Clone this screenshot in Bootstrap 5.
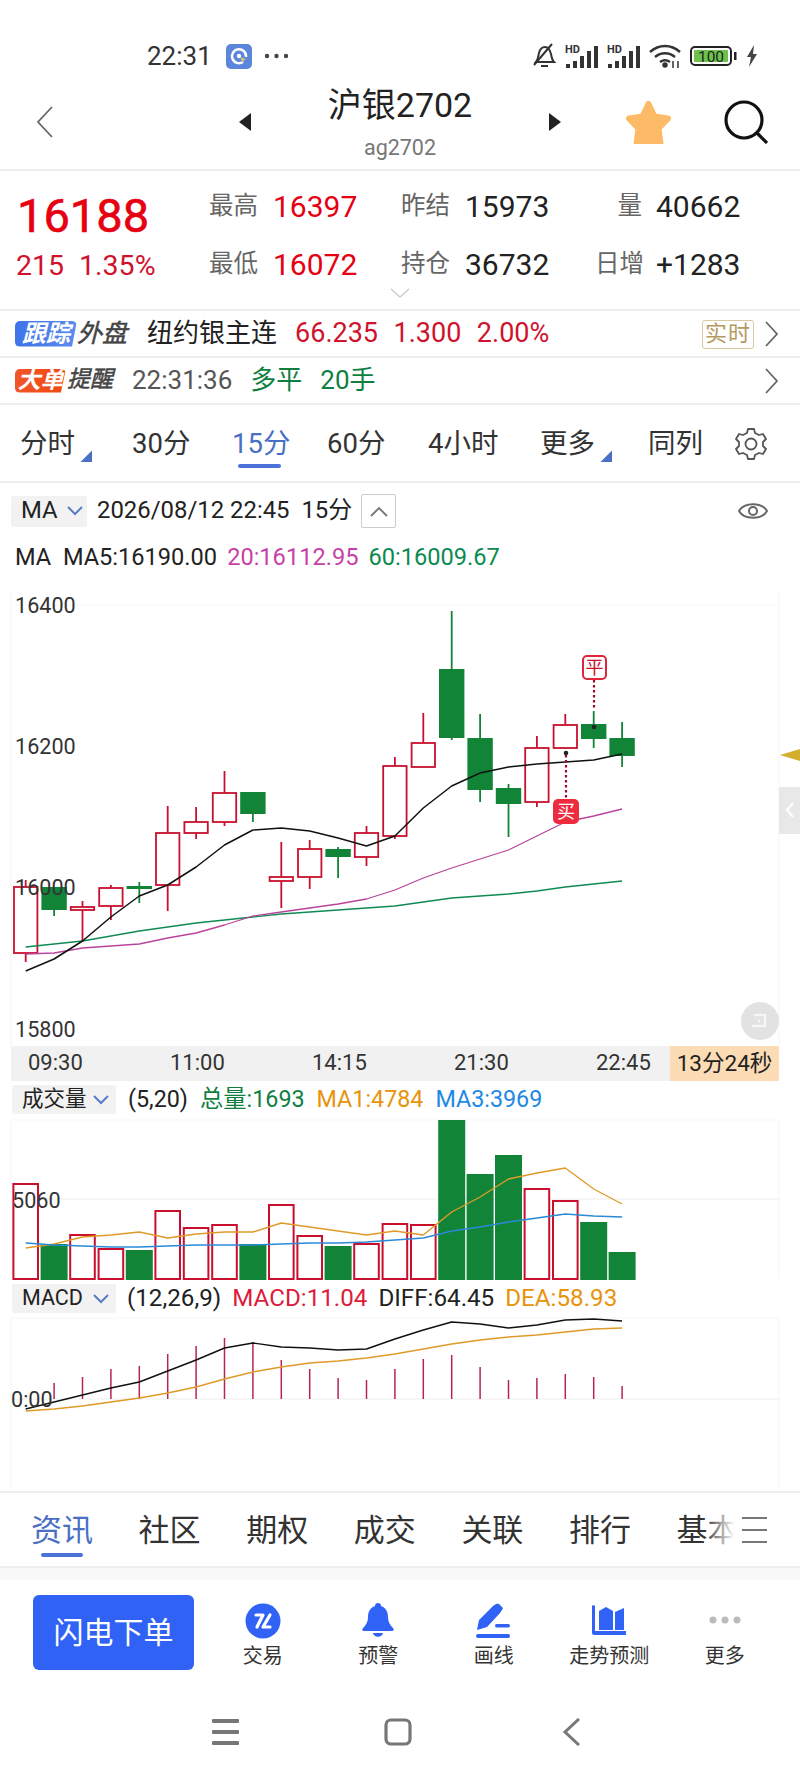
<!DOCTYPE html>
<html lang="zh-CN">
<head>
    <meta charset="UTF-8">
    <meta name="viewport" content="width=device-width, initial-scale=1.0">
    <title>沪银2702</title>
    <link href="https://cdn.jsdelivr.net/npm/bootstrap@5.3.0/dist/css/bootstrap.min.css" rel="stylesheet">
    <style>
        body { width: 800px; height: 1778px; overflow: hidden; background: #fff; color: #222;
               font-family: Roboto, "Noto Sans CJK SC", sans-serif; }
        svg { display: block; flex: none; }
        svg text { font-family: Roboto, "Noto Sans CJK SC", sans-serif; }
        .up-red { color: #e60012; }
        .dn-red { color: #d0122d; }
        .st-green { color: #0f7f3f; }
        .sep { border-bottom: 2px solid #eee; }

        .status-bar { height: 78px; padding: 34px 42px 0 147px; }
        .status-time { font-size: 26px; color: #333; width: 79px; }
        .status-dots { margin-left: 12px; }
        .status-right { margin-left: auto; gap: 9px; }

        .top-head { height: 93px; padding: 0 0 4px 36px; }
        .head-prev { margin-left: 186px; }
        .head-star { margin-left: 65px; }
        .head-search { margin-left: 53px; }
        .top-title { width: 298px; text-align: center; margin-top: 4px; }
        .top-title-main { font-size: 34px; line-height: 42px; color: #222; }
        .top-title-sub { font-size: 21.5px; line-height: 30px; margin-top: 7px; color: #777; }

        .quote-box { height: 140px; position: relative; padding-top: 6px; }
        .quote-left { width: 209px; padding: 9px 0 0 17px; }
        .quote-last { font-size: 47px; line-height: 60px; -webkit-text-stroke: .6px #e60012; margin-bottom: 2px; }
        .quote-chg { font-size: 28.500px; line-height: 36px; margin-left: -1px; color: #d0122d; }
        .quote-chg span + span { margin-left: 15px; }
        .quote-stat { height: 58px; align-items: center; font-size: 30px; }
        .stat-a { width: 192px; }
        .stat-b { width: 194px; }
        .stat-c { width: 146px; }
        .stat-name { font-size: 24.5px; color: #666; width: 64px; }
        .stat-c .stat-name { width: 47px; margin-right: 14px; text-align: right; white-space: nowrap; }
        .quote-more { position: absolute; left: 390px; top: 117px; }

        .info-row { font-size: 26px; padding-left: 15px; position: relative; white-space: nowrap; height: 47px; }
        .tag-blue { background: linear-gradient(90deg, #3f73e8, #5b8cf0); color: #fff; font-size: 24px; line-height: 26px;
                    width: 62px; height: 26px; font-style: italic; font-weight: 700; text-align: center; border-radius: 5px 5px 0 5px;
                    clip-path: polygon(0 0, 100% 0, 92% 100%, 0 100%); }
        .tag-dark { color: #444; font-style: italic; font-size: 25px; -webkit-text-stroke: .5px #444; }
        .tag-dark-sm { font-size: 23px; margin-left: 1px; }
        .tag-orange { background: linear-gradient(90deg, #f0562a, #f2480f); color: #fff; font-size: 23px; line-height: 24px;
                      width: 51px; height: 24px; font-style: italic; font-weight: 700; text-align: center; border-radius: 5px 5px 0 5px;
                      clip-path: polygon(0 0, 100% 0, 90% 100%, 0 100%); }
        .fut-name { margin: 0 18px 0 20px; }
        .fut-num { font-size: 27px; }
        .fut-num + .fut-num { margin-left: 15.5px; }
        .alert-time { margin-left: 19px; color: #555; }
        .alert-item { margin-left: 18px; }
        .rt-box { position: absolute; left: 702px; top: 9px; width: 52px; height: 29px; border: 1px solid #d8c9a2; border-radius: 3px;
                  color: #b59a5f; font-size: 22px; line-height: 26px; text-align: center; letter-spacing: 1px; }
        .row-arrow { position: absolute; left: 765px; }

        .period-row { height: 78px; display: grid; padding: 2px 0 0 20px;
                      grid-template-columns: 112px 100px 95px 101px 112px 108px 87px 1fr; align-items: center; font-size: 27.5px; color: #333; }
        .period-on { color: #4a6fc4; position: relative; }
        .period-on::after { content: ""; position: absolute; left: 6px; width: 43px; height: 4px; top: 41px; border-radius: 2px; background: #4a72d8; }
        .period-item { position: relative; white-space: nowrap; }
        .period-corner { position: absolute; left: 60px; width: 12px; height: 12px; top: 27px; background: #4a6fc4; clip-path: polygon(100% 0, 100% 100%, 0 100%); }

        .drop-box { background: #f2f2f2; border-radius: 3px; align-items: center; }
        .ma-head { height: 56px; padding-left: 11px; font-size: 23.9px; position: relative; }
        .ma-drop { width: 76px; height: 31px; padding-left: 10px; gap: 9px; }
        .ma-stamp { margin-left: 10px; width: 264px; white-space: nowrap; }
        .fold-btn { width: 35px; height: 34px; border: 1px solid #ccc; border-radius: 2px; }
        .ma-eye { margin-left: auto; margin-right: 32px; }
        .legend-row { font-size: 23.3px; white-space: nowrap; }
        .ma-line { height: 36px; padding: 2px 0 0 15px; gap: 10px; font-size: 23.6px; }
        .c-ma20 { color: #c73fa8; }
        .c-ma60 { color: #0a8a50; }
        .c-ma1 { color: #e8930c; }
        .c-ma3 { color: #1e88e5; }
        .c-red { color: #dc1c3c; }

        .time-axis { height: 35px; margin-left: 11px; width: 768px; background: #f1f1f1; font-size: 22px; }
        .time-list { display: grid; grid-template-columns: repeat(5, 142px); padding: 0 0 6px 17px; width: 659px; color: #333; white-space: nowrap; }
        .time-left { width: 109px; background: #fcdcb4; text-align: center; font-size: 22.5px; white-space: nowrap; }

        .sub-head { padding-left: 12px; gap: 12px; }
        .sub-head-a { height: 37px; }
        .sub-head-b { height: 35px; font-size: 24.2px; gap: 11px; }
        .sub-drop { width: 104px; height: 29px; padding-left: 10px; justify-content: space-between; padding-right: 7px; font-size: 21.5px; }

        .news-tabs { height: 77px; border-top: 2px solid #eee; padding: 3px 0 0 31px; gap: 45.6px; font-size: 31px; color: #333; position: relative; white-space: nowrap; overflow: hidden; }
        .news-on { color: #4a6fc4; position: relative; }
        .news-on::after { content: ""; position: absolute; left: 10px; width: 42px; height: 4px; top: 45px; border-radius: 2px; background: #4a72d8; }
        .news-fade { position: absolute; right: 0; top: 0; bottom: 0; width: 96px; display: flex; align-items: center;
                     background: linear-gradient(90deg, rgba(255,255,255,0), #fff 32%); padding-left: 38px; }
        .band { height: 12px; background: #f8f8f8; }

        .action-bar { height: 105px; padding-left: 33px; }
        .fast-btn { width: 161px; height: 75px; background: #2f62f5; color: #fff; border: 0; border-radius: 6px; font-size: 30px; margin-right: 11px; padding: 0; }
        .action-item { flex: 0 0 115.5px; font-size: 20px; color: #333; white-space: nowrap; align-self: flex-start; padding-top: 23px; }
        .action-icon { height: 36px; margin-bottom: 2px; }
        .sys-nav { height: 93px; padding-right: 4px; }
        .sys-nav > div { width: 173px; }
    </style>
</head>
<body>

<div class="status-bar d-flex align-items-center">
    <span class="status-time">22:31</span>
    <svg width="26" height="25" viewBox="0 0 26 25"><rect width="26" height="25" rx="5" fill="#5b86dc"/><path d="M17 18a7 7 0 1 1 3-5" fill="none" stroke="#fff" stroke-width="2.500"/><circle cx="13" cy="12" r="2.200" fill="#fff"/><path d="M14 13l6 2-2 1-1 3z" fill="#d8c27a"/></svg>
    <svg class="status-dots" width="25" height="6" viewBox="0 0 25 6" fill="#444"><circle cx="3" cy="3" r="2.200"/><circle cx="12.500" cy="3" r="2.200"/><circle cx="22" cy="3" r="2.200"/></svg>
    <div class="status-right d-flex align-items-center">
        <svg width="24" height="26" viewBox="0 0 24 26" fill="none" stroke="#333" stroke-width="2"><path d="M4 19c2-2 2-5 3-9 1-4 3-6 6-6s5 3 6 7c.5 3 1 6 3 8z"/><path d="M9 23h7M20 1L2 22"/></svg>
        <svg width="33" height="24" viewBox="0 0 33 24"><text x="0" y="9" font-size="11" font-weight="700" fill="#333">HD</text><g fill="#333"><rect x="1" y="20" width="4" height="4"/><rect x="8" y="17" width="4" height="7"/><rect x="15" y="12" width="4" height="12"/><rect x="22" y="7" width="4" height="17"/><rect x="29" y="2" width="4" height="22"/></g></svg>
        <svg width="33" height="24" viewBox="0 0 33 24"><text x="0" y="9" font-size="11" font-weight="700" fill="#333">HD</text><g fill="#333"><rect x="1" y="20" width="4" height="4"/><rect x="8" y="17" width="4" height="7"/><rect x="15" y="12" width="4" height="12"/><rect x="22" y="7" width="4" height="17"/><rect x="29" y="2" width="4" height="22"/></g></svg>
        <svg width="32" height="24" viewBox="0 0 32 24" fill="none" stroke="#333" stroke-width="2.500"><path d="M1 8c9-8 21-8 30 0M6 13c6-5 14-5 20 0M11 18c3-2 7-2 10 0"/><circle cx="16" cy="21" r="1.500" fill="#333"/><path d="M24 17v7M29 17v7" stroke-width="1.500"/></svg>
        <svg width="47" height="20" viewBox="0 0 47 20"><rect x="1" y="1" width="40" height="18" rx="4" fill="#fff" stroke="#222" stroke-width="2"/><rect x="4" y="4" width="34" height="12" rx="1" fill="#6cc24a"/><text x="21" y="16" font-size="15.500" text-anchor="middle" fill="#222">100</text><rect x="44" y="6" width="2.500" height="8" fill="#222"/></svg>
        <svg width="12" height="22" viewBox="0 0 12 22"><path d="M8 0L1 12h4l-2 10 8-13H7z" fill="#444"/></svg>
    </div>
</div>

<div class="top-head sep d-flex align-items-center">
    <svg width="17" height="32" viewBox="0 0 17 32"><path d="M16 1L2 16l14 15" fill="none" stroke="#666" stroke-width="1.800"/></svg>
    <svg class="head-prev" width="12" height="18" viewBox="0 0 12 18"><path d="M12 0v18L0 9z" fill="#222"/></svg>
    <div class="top-title">
        <div class="top-title-main">沪银2702</div>
        <div class="top-title-sub">ag2702</div>
    </div>
    <svg width="12" height="18" viewBox="0 0 12 18"><path d="M0 0v18l12-9z" fill="#222"/></svg>
    <svg class="head-star" width="45" height="44" viewBox="0 0 45 44"><path d="M22.500 4l6 12.500 13.500 2-9.500 10 2 15.500h-24l2-15.500-9.500-10 13.500-2z" fill="#fdbb68" stroke="#fdbb68" stroke-width="6" stroke-linejoin="round"/></svg>
    <svg class="head-search" width="44" height="44" viewBox="0 0 44 44" fill="none" stroke="#111" stroke-width="3.200"><circle cx="20" cy="20" r="18"/><path d="M33 33l10 10"/></svg>
</div>

<div class="quote-box sep d-flex">
    <div class="quote-left">
        <div class="quote-last up-red">16188</div>
        <div class="quote-chg"><span>215</span><span>1.35%</span></div>
    </div>
    <div class="stat-a">
        <div class="quote-stat d-flex"><span class="stat-name">最高</span><span class="up-red">16397</span></div>
        <div class="quote-stat d-flex"><span class="stat-name">最低</span><span class="up-red">16072</span></div>
    </div>
    <div class="stat-b">
        <div class="quote-stat d-flex"><span class="stat-name">昨结</span><span>15973</span></div>
        <div class="quote-stat d-flex"><span class="stat-name">持仓</span><span>36732</span></div>
    </div>
    <div class="stat-c">
        <div class="quote-stat d-flex"><span class="stat-name">量</span><span>40662</span></div>
        <div class="quote-stat d-flex"><span class="stat-name">日增</span><span>+1283</span></div>
    </div>
    <svg class="quote-more" width="20" height="10" viewBox="0 0 20 10"><path d="M1 1l9 8 9-8" fill="none" stroke="#ccc" stroke-width="1.500"/></svg>
</div>

<div class="info-row sep d-flex align-items-center">
    <span class="tag-blue">跟踪</span><span class="tag-dark">外盘</span>
    <span class="fut-name">纽约银主连</span>
    <span class="dn-red fut-num">66.235</span>
    <span class="dn-red fut-num">1.300</span>
    <span class="dn-red fut-num">2.00%</span>
    <span class="rt-box">实时</span>
    <svg class="row-arrow" width="13" height="26" viewBox="0 0 13 26"><path d="M1 1l11 12L1 25" fill="none" stroke="#666" stroke-width="1.800"/></svg>
</div>

<div class="info-row sep d-flex align-items-center">
    <span class="tag-orange">大单</span><span class="tag-dark tag-dark-sm">提醒</span>
    <span class="alert-time">22:31:36</span>
    <span class="st-green alert-item">多平</span>
    <span class="st-green alert-item">20手</span>
    <svg class="row-arrow" width="13" height="26" viewBox="0 0 13 26"><path d="M1 1l11 12L1 25" fill="none" stroke="#666" stroke-width="1.800"/></svg>
</div>

<div class="period-row sep">
    <div class="period-item">分时<span class="period-corner"></span></div>
    <div class="period-item">30分</div>
    <div class="period-item period-on">15分</div>
    <div class="period-item">60分</div>
    <div class="period-item">4小时</div>
    <div class="period-item">更多<span class="period-corner"></span></div>
    <div class="period-item">同列</div>
    <svg width="32" height="34" viewBox="0 0 32 34" fill="none" stroke="#555" stroke-width="1.800" stroke-linejoin="round"><path d="M13 2h6l1 4 4 2 4-1 3 5-3 3v4l3 3-3 5-4-1-4 2-1 4h-6l-1-4-4-2-4 1-3-5 3-3v-4l-3-3 3-5 4 1 4-2z"/><circle cx="16" cy="17" r="5.500"/></svg>
</div>

<div class="ma-head d-flex align-items-center">
    <div class="drop-box ma-drop d-flex"><span>MA</span><svg width="16" height="10" viewBox="0 0 16 10"><path d="M1 1l7 7 7-7" fill="none" stroke="#5a7bc8" stroke-width="2"/></svg></div>
    <span class="ma-stamp">2026/08/12 22:45&nbsp;&nbsp;15分</span>
    <div class="fold-btn d-flex align-items-center justify-content-center"><svg width="18" height="11" viewBox="0 0 18 11"><path d="M1 10l8-8 8 8" fill="none" stroke="#777" stroke-width="1.800"/></svg></div>
    <svg class="ma-eye" width="30" height="22" viewBox="0 0 30 22" fill="none" stroke="#666" stroke-width="2"><path d="M1 11C6 2 24 2 29 11 24 20 6 20 1 11z"/><circle cx="15" cy="11" r="4"/></svg>
</div>

<div class="legend-row ma-line d-flex align-items-center">
    <span>MA&nbsp;&nbsp;MA5:16190.00</span>
    <span class="c-ma20">20:16112.95</span>
    <span class="c-ma60">60:16009.67</span>
</div>

<svg id="chartMain" width="800" height="471" viewBox="0 575 800 471"></svg>

<div class="time-axis d-flex">
    <div class="time-list align-items-center">
        <span>09:30</span><span>11:00</span><span>14:15</span><span>21:30</span><span>22:45</span>
    </div>
    <div class="time-left d-flex align-items-center justify-content-center">13分24秒</div>
</div>

<div class="legend-row sub-head sub-head-a d-flex align-items-center">
    <div class="drop-box sub-drop d-flex"><span>成交量</span><svg width="16" height="10" viewBox="0 0 16 10"><path d="M1 1l7 7 7-7" fill="none" stroke="#5a7bc8" stroke-width="2"/></svg></div>
    <span>(5,20)</span>
    <span class="st-green">总量:1693</span>
    <span class="c-ma1">MA1:4784</span>
    <span class="c-ma3">MA3:3969</span>
</div>

<svg id="chartVol" width="800" height="163" viewBox="0 1118 800 163"></svg>

<div class="legend-row sub-head sub-head-b d-flex align-items-center">
    <div class="drop-box sub-drop d-flex"><span>MACD</span><svg width="16" height="10" viewBox="0 0 16 10"><path d="M1 1l7 7 7-7" fill="none" stroke="#5a7bc8" stroke-width="2"/></svg></div>
    <span>(12,26,9)</span>
    <span class="c-red">MACD:11.04</span>
    <span>DIFF:64.45</span>
    <span class="c-ma1">DEA:58.93</span>
</div>

<svg id="chartMacd" width="800" height="175" viewBox="0 1316 800 175"></svg>

<div class="news-tabs sep d-flex align-items-center">
    <span class="news-on">资讯</span><span>社区</span><span>期权</span><span>成交</span><span>关联</span><span>排行</span><span>基本</span>
    <div class="news-fade"><svg width="26" height="26" viewBox="0 0 26 26" stroke="#777" stroke-width="1.800"><path d="M0 1h25M0 13h25M0 25h25"/></svg></div>
</div>
<div class="band"></div>

<div class="action-bar d-flex align-items-center">
    <button type="button" class="btn fast-btn">闪电下单</button>
    <div class="action-item d-flex flex-column align-items-center">
        <svg class="action-icon" width="36" height="36" viewBox="0 0 36 36"><circle cx="18" cy="18" r="17.500" fill="#2f62f5"/><path d="M11 12h7l-6 12M25 12l-7 12h7" fill="none" stroke="#fff" stroke-width="3.200" stroke-linecap="round" stroke-linejoin="round"/></svg>
        <span>交易</span>
    </div>
    <div class="action-item d-flex flex-column align-items-center">
        <svg class="action-icon" width="32" height="36" viewBox="0 0 32 36" fill="#2f62f5"><path d="M16 0c2 0 3 1 3 3 5 2 7 6 7 11 0 5 2 8 5 11 1 1 1 3-1 3H2c-2 0-2-2-1-3 3-3 5-6 5-11 0-5 2-9 7-11 0-2 1-3 3-3z"/><path d="M11 30h10c-1 5-9 5-10 0z"/></svg>
        <span>预警</span>
    </div>
    <div class="action-item d-flex flex-column align-items-center">
        <svg class="action-icon" width="35" height="36" viewBox="0 0 35 36" fill="#2f62f5"><path d="M1 27l2-10L17 3l3-2c1-.5 2-.5 3 0l3 3c1 1 1 2 0 3l-2 3-13 14z"/><rect x="19" y="21" width="15" height="3.500" rx="1.700"/><rect y="31" width="34" height="4" rx="2"/></svg>
        <span>画线</span>
    </div>
    <div class="action-item d-flex flex-column align-items-center">
        <svg class="action-icon" width="34" height="36" viewBox="0 0 34 36" fill="#2f62f5"><path d="M0 3c0-1 3-1 3 0v25h31v4H2a2 2 0 0 1-2-2z"/><path d="M7 8l7-4 7 4v19H7zM23 9l9-4v22h-9z"/></svg>
        <span>走势预测</span>
    </div>
    <div class="action-item d-flex flex-column align-items-center">
        <svg class="action-icon" width="32" height="36" viewBox="0 0 32 36" fill="#bbb"><circle cx="4" cy="17" r="3.500"/><circle cx="16" cy="17" r="3.500"/><circle cx="28" cy="17" r="3.500"/></svg>
        <span>更多</span>
    </div>
</div>

<div class="sys-nav d-flex align-items-center justify-content-center">
    <div class="d-flex justify-content-center"><svg width="27" height="26" viewBox="0 0 27 26" fill="#777"><rect width="27" height="4" rx="1"/><rect y="11" width="27" height="4" rx="1"/><rect y="22" width="27" height="4" rx="1"/></svg></div>
    <div class="d-flex justify-content-center"><svg width="28" height="28" viewBox="0 0 28 28"><rect x="2" y="2" width="24" height="24" rx="5" fill="none" stroke="#777" stroke-width="3.200"/></svg></div>
    <div class="d-flex justify-content-center"><svg width="18" height="28" viewBox="0 0 18 28"><path d="M17 1L3 14l14 13" fill="none" stroke="#777" stroke-width="3"/></svg></div>
</div>

<script>
    // x of each bar
    function barX(i) { return 25.7 + 28.4 * i; }

    const red = '#c8102e', green = '#118438';

    // [isUp, bodyTop, bodyBottom, wickTop, wickBottom]
    const candles = [
        [1,887,953,880,962],[0,887,910,887,916],[1,907,910,901,942],[1,888,906,885,920],[0,886,889,882,903],
        [1,833,885,806,911],[1,822,833,807,839],[1,793,822,771,826],[0,792,814,792,822],[1,877,881,842,908],
        [1,849,877,840,889],[0,849,857,847,878],[1,833,857,826,866],[1,766,836,757,839],[1,743,767,713,767],
        [0,669,738,611,740],[0,738,790,714,802],[0,788,804,784,837],[1,748,802,736,807],[1,725,748,714,748],
        [0,724,739,711,748],[0,738,756,722,767]
    ];
    const ma5  = [971,959,941,917,896,885,867,845,830,828,831,838,846,836,808,786,773,767,764,762,760,754];
    const ma20 = [954,953,948,946,944,938,933,925,916,912,908,904,899,890,878,868,859,850,836,822,816,809];
    const ma60 = [947,944,941,936,931,927,923,920,917,914,912,910,908,906,902,898,896,894,891,887,884,881];

    const volTop = [1184,1244,1235,1249,1250,1211,1228,1225,1244,1205,1236,1246,1244,1224,1225,1120,1174,1155,1189,1201,1222,1252];
    const ma1 = [1248,1244,1237,1235,1232,1238,1234,1232,1232,1223,1227,1231,1235,1231,1235,1212,1197,1179,1173,1168,1189,1204];
    const ma3 = [1243,1245,1246,1247,1247,1246,1245,1245,1245,1244,1243,1243,1242,1240,1238,1231,1227,1222,1218,1214,1216,1217];

    const macdTop = [null,1383,1377,1369,1366,1354,1346,1338,1342,1360,1369,1378,1380,1369,1359,1355,1367,1380,1378,1374,1377,1386];
    const diff = [1409,1402,1395,1388,1382,1371,1360,1348,1343,1347,1348,1350,1349,1339,1330,1322,1324,1328,1325,1320,1319,1321];
    const dea  = [1411,1409,1406,1402,1398,1393,1387,1379,1372,1367,1363,1361,1358,1354,1349,1344,1340,1337,1335,1332,1329,1328];

    function line(ys, color, w) {
        const pts = ys.map((y, i) => barX(i).toFixed(1) + ',' + y).join(' ');
        return `<polyline points="${pts}" fill="none" stroke="${color}" stroke-width="${w}" stroke-linejoin="round"/>`;
    }
    function label(x, y, txt) {
        return `<text x="${x}" y="${y}" font-size="21.6" fill="#333">${txt}</text>`;
    }
    function frame(top, bottom) {
        return `<path d="M11 ${top}V${bottom}M779 ${top}V${bottom}" stroke="#f6f6f6" stroke-width="1"/>`;
    }

    let html = frame(590, 1046);
    html += '<path d="M11 605H779" stroke="#f7f7f7"/>';
    candles.forEach((c, i) => {
        const x = barX(i), col = c[0] ? red : green;
        html += `<path d="M${x} ${c[3]}V${c[4]}" stroke="${col}" stroke-width="1.800"/>`;
        if (c[0]) html += `<rect x="${x - 11.700}" y="${c[1]}" width="23.400" height="${c[2] - c[1]}" fill="#fff" stroke="${col}" stroke-width="1.800"/>`;
        else html += `<rect x="${x - 12.700}" y="${c[1]}" width="25.400" height="${c[2] - c[1]}" fill="${col}"/>`;
    });
    html += line(ma60, '#0f8a55', 1.3) + line(ma20, '#b8449c', 1.3) + line(ma5, '#111', 1.5);
    html += label(15, 613, '16400') + label(15, 754, '16200') + label(15, 895, '16000') + label(15, 1037, '15800');
    // 平 / 买 marks
    html += '<path d="M594 680V708M566 755V799" stroke="#a00a28" stroke-width="2.200" stroke-dasharray="2.500 2.500"/>';
    html += '<circle cx="594" cy="727" r="2.300" fill="#222"/><circle cx="566" cy="753" r="2.300" fill="#222"/>';
    html += '<rect x="583" y="656" width="23" height="23" rx="4" fill="#fff" stroke="#e0243c" stroke-width="2"/>';
    html += '<text x="594.500" y="674" font-size="18" text-anchor="middle" fill="#c8102e">平</text>';
    html += '<rect x="553" y="799" width="26" height="25" rx="5" fill="#ee2a3e"/>';
    html += '<text x="566" y="818" font-size="18" text-anchor="middle" fill="#fff">买</text>';
    // right edge items
    html += '<path d="M780 755L800 749V761z" fill="#d4ae2e"/>';
    html += '<rect x="779" y="787" width="21" height="47" fill="#e8e8e8"/><path d="M793 803l-6 7 6 7" fill="none" stroke="#fff" stroke-width="2"/>';
    html += '<circle cx="760" cy="1021" r="19" fill="#e2e2e2"/><path d="M754 1015h11v11h-13M758 1021h2" fill="none" stroke="#f6f6f6" stroke-width="2.500"/>';
    document.getElementById('chartMain').innerHTML = html;

    html = frame(1120, 1279) + '<path d="M11 1120H779" stroke="#f7f7f7"/><path d="M11 1199H779" stroke="#eee"/>';
    volTop.forEach((top, i) => {
        const x = barX(i), up = candles[i][0];
        if (up) html += `<rect x="${x - 12.300}" y="${top}" width="24.600" height="${1279 - top}" fill="#fff" stroke="${red}" stroke-width="2"/>`;
        else html += `<rect x="${x - 13.500}" y="${top}" width="27" height="${1280 - top}" fill="${green}"/>`;
    });
    html += line(ma1, '#e09a28', 1.4) + line(ma3, '#2a8ad6', 1.4);
    html += label(12, 1208, '5060');
    document.getElementById('chartVol').innerHTML = html;

    html = frame(1318, 1491) + '<path d="M11 1318H779" stroke="#f7f7f7"/><path d="M11 1399H779" stroke="#eee"/>';
    macdTop.forEach((top, i) => {
        if (top) html += `<path d="M${barX(i)} ${top}V1399" stroke="#b5264f" stroke-width="1.500"/>`;
    });
    html += line(diff, '#111', 1.4) + line(dea, '#e09a28', 1.4);
    html += label(11, 1407, '0:00');
    document.getElementById('chartMacd').innerHTML = html;
</script>
</body>
</html>
